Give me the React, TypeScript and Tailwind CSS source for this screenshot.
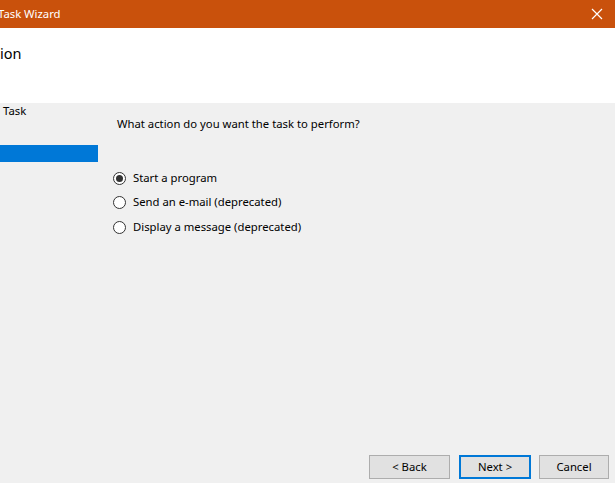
const options = [
  { label: "Start a program", checked: true },
  { label: "Send an e-mail (deprecated)", checked: false },
  { label: "Display a message (deprecated)", checked: false },
];

function Radio({ checked }: { checked: boolean }) {
  return (
    <span className="flex h-[13px] w-[13px] shrink-0 items-center justify-center rounded-full border border-[#333333] bg-white">
      {checked && <span className="h-[7px] w-[7px] rounded-full bg-[#333333]" />}
    </span>
  );
}

function Button({ children, width, primary }: { children: string; width: string; primary?: boolean }) {
  return (
    <button
      className={
        "h-[24px] bg-[#e1e1e1] text-[11.3px] text-black " +
        width +
        (primary ? " border-2 border-[#0078d7]" : " border border-[#adadad]")
      }
    >
      {children}
    </button>
  );
}

export default function App() {
  return (
    <div
      className="flex h-[483px] w-[615px] flex-col overflow-hidden bg-[#f0f0f0] text-black"
      style={{ fontFamily: '"Noto Sans", "Open Sans", sans-serif' }}
    >
      {/* title bar */}
      <div className="flex h-[28px] shrink-0 items-center bg-[#c9510c] text-white">
        <span className="-ml-[2px] flex-1 text-[11.3px]">Task Wizard</span>
        <div className="flex h-[28px] w-[24px] shrink-0 items-center justify-start">
          <svg width="12" height="12" viewBox="0 0 12 12" fill="none">
            <path d="M1 1 L11 11 M11 1 L1 11" stroke="#ffffff" strokeWidth="1.2" />
          </svg>
        </div>
      </div>

      {/* header */}
      <div className="h-[75px] shrink-0 bg-white pt-[13px]">
        <span className="text-[14.5px]">ion</span>
      </div>

      {/* body */}
      <div className="flex flex-1 flex-col">
        <div className="flex flex-1">
          <div className="w-[98px] shrink-0 text-[11.3px]">
            <div className="pl-[3px]">Task</div>
            <div className="mt-[25px] h-[17px] bg-[#0078d7]" />
          </div>
          <div className="ml-[19px] pt-[13px] text-[11.3px]">
            <div>What action do you want the task to perform?</div>
            <div className="mt-[33px] -ml-[4px] flex flex-col">
              {options.map((o) => (
                <label key={o.label} className="flex h-[24.5px] items-center gap-[7px]">
                  <Radio checked={o.checked} />
                  <span>{o.label}</span>
                </label>
              ))}
            </div>
          </div>
        </div>
        <div className="flex justify-end pb-[4px] pr-[6px]">
          <Button width="w-[81px]">&lt; Back</Button>
          <div className="w-[9px]" />
          <Button width="w-[72px]" primary>
            Next &gt;
          </Button>
          <div className="w-[8px]" />
          <Button width="w-[70px]">Cancel</Button>
        </div>
      </div>
    </div>
  );
}
